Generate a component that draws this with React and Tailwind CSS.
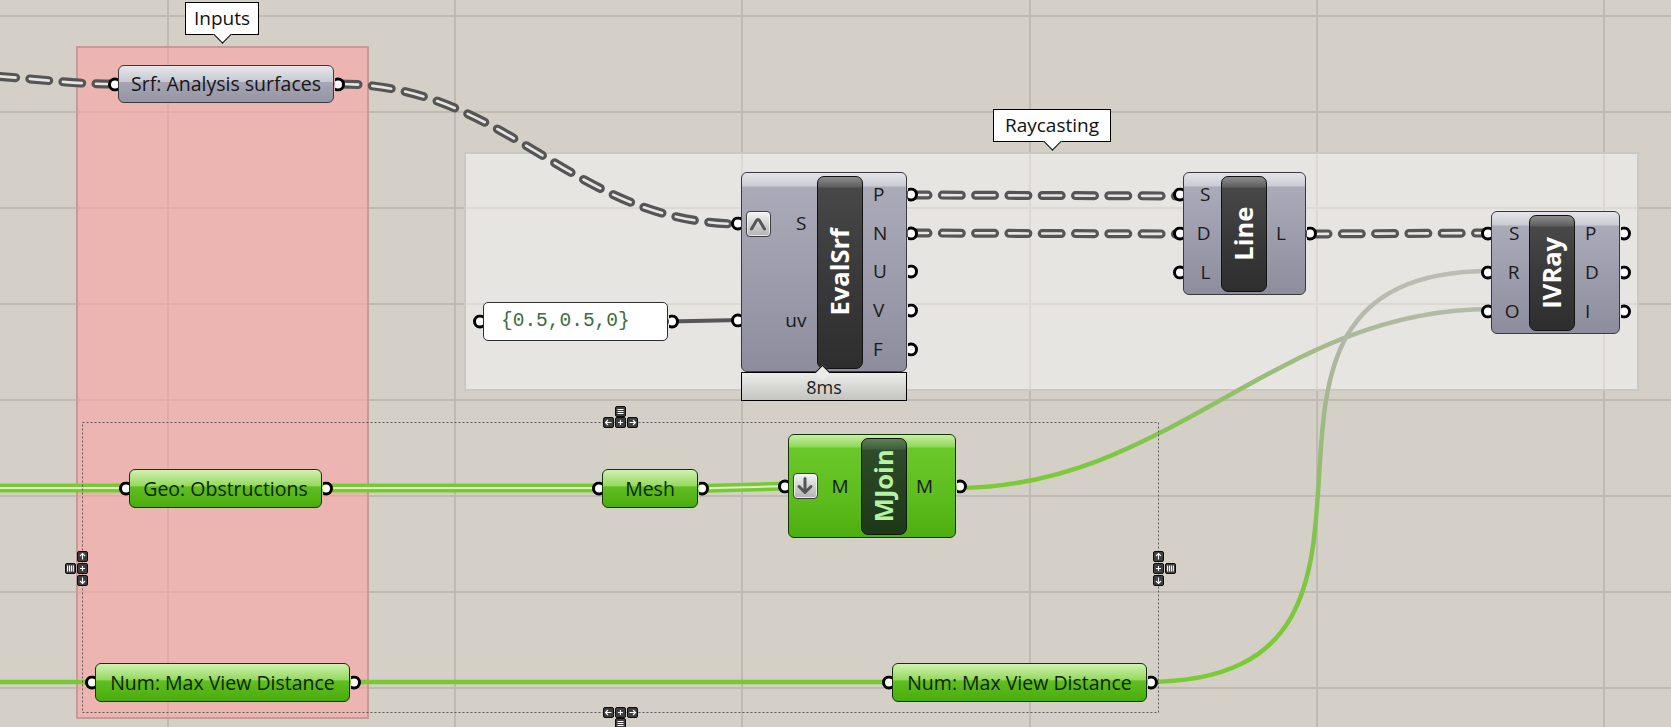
import React from "react";

const SANS = "font-['Open_Sans','Noto_Sans',sans-serif]";

const GRAY_COMP =
  "bg-[linear-gradient(to_bottom,#e4e4ea_0px,#cbcbd4_13px,#aaaab9_14px,#9a9aaa_60%,#8d8d9d_100%)] border-[#3a3a3a]";
const GREEN_COMP =
  "bg-[linear-gradient(to_bottom,#c9eea6_0px,#8fd657_12px,#6cc82a_13px,#5dbd1e_60%,#4eae10_100%)] border-[#133405]";
const GRAY_BAR =
  "bg-[linear-gradient(to_bottom,#8c8c8c_0px,#5e5e5e_10px,#484848_11px,#3a3a3a_50%,#2e2e2e_100%)] border-[#121212] text-white";
const GREEN_BAR =
  "bg-[linear-gradient(to_bottom,#5f7f59_0px,#3f5f3a_10px,#2f4d2b_11px,#26421f_50%,#1d3818_100%)] border-[#0b1a07] text-[#b6f2a4]";
const GRAY_PARAM =
  "bg-[linear-gradient(to_bottom,#e6e6ec_0%,#c8c8d1_44%,#a5a5b4_45%,#9595a5_100%)] border-[#3a3a3a]";
const GREEN_PARAM =
  "bg-[linear-gradient(to_bottom,#d0f2b0_0%,#93d75c_44%,#61bf20_45%,#4aac0e_100%)] border-[#143306]";

function PortL() {
  return (
    <span className="absolute left-[-11.5px] top-1/2 -translate-y-1/2 w-[10px] h-[15px] overflow-hidden">
      <span className="block w-[14px] h-[14px] mt-[0.5px] rounded-full border-[3.5px] border-black bg-white" />
    </span>
  );
}

function PortR() {
  return (
    <span className="absolute right-[-11.5px] top-1/2 -translate-y-1/2 w-[10px] h-[15px] overflow-hidden">
      <span className="block w-[14px] h-[14px] mt-[0.5px] ml-[-4px] rounded-full border-[3.5px] border-black bg-white" />
    </span>
  );
}

function Btn({ children }) {
  return (
    <div className="w-[25px] h-[26px] rounded-[4px] border-[1.5px] border-[#3d3d3d] bg-[linear-gradient(to_bottom,#f4f4f4,#b2b2b2)] shadow-[inset_0_0_0_1px_rgba(255,255,255,0.7)] flex items-center justify-center">
      {children}
    </div>
  );
}

function UpBtn() {
  return (
    <Btn>
      <svg width="20" height="20" viewBox="0 0 20 20">
        <path d="M3.5 15 L8.5 6.5 Q10 4.5 11.5 6.5 L16.5 15" stroke="#555" strokeWidth="3" fill="none" strokeLinecap="round" strokeLinejoin="round" />
      </svg>
    </Btn>
  );
}

function DownBtn() {
  return (
    <Btn>
      <svg width="20" height="20" viewBox="0 0 20 20">
        <path d="M10 2.5 V16 M4 10.5 L10 16.5 L16 10.5" stroke="#555" strokeWidth="3" fill="none" strokeLinecap="round" strokeLinejoin="round" />
      </svg>
    </Btn>
  );
}

function Comp({ pos, green, inW, inPr, outPl, name, inputs, outputs }) {
  return (
    <div
      className={`absolute flex py-[2.5px] rounded-[6px] border-[1.5px] ${green ? GREEN_COMP : GRAY_COMP} ${pos}`}
    >
      <div className={`flex flex-col ${inW}`}>
        {inputs.map((inp, i) => (
          <div key={i} className="relative flex flex-1 items-center">
            <PortL />
            {inp.button ? <div className="ml-[3.5px]">{inp.button}</div> : null}
            <span className={`ml-auto ${inPr} text-[19px] leading-none text-[#1a1a1a]`}>{inp.label}</span>
          </div>
        ))}
      </div>
      <div
        className={`flex w-[46.5px] items-center justify-center rounded-[7px] border-[1.5px] ${green ? GREEN_BAR : GRAY_BAR}`}
      >
        <span className="-rotate-90 whitespace-nowrap text-[25.5px] font-bold leading-none">{name}</span>
      </div>
      <div className="flex flex-1 flex-col">
        {outputs.map((o, i) => (
          <div key={i} className="relative flex flex-1 items-center">
            <span className={`${outPl} text-[19px] leading-none text-[#1a1a1a]`}>{o}</span>
            <PortR />
          </div>
        ))}
      </div>
    </div>
  );
}

function Param({ pos, green, text }) {
  return (
    <div
      className={`absolute flex items-center justify-center rounded-[6px] border-[1.5px] ${green ? GREEN_PARAM : GRAY_PARAM} ${pos}`}
    >
      <PortL />
      <span className={`text-[19.5px] leading-none ${green ? "text-[#0c2600]" : "text-[#161616]"}`}>{text}</span>
      <PortR />
    </div>
  );
}

function Handle({ pos, d }) {
  return (
    <div className={`absolute w-[11px] h-[11px] rounded-[2px] border border-[#0c0c0c] bg-[#3e3e3e] ${pos}`}>
      <svg width="9" height="9" viewBox="0 0 9 9" className="block">
        <path d={d} stroke="#fff" strokeWidth="1.1" fill="none" />
      </svg>
    </div>
  );
}

const ICON = {
  left: "M1.5 4.5 H7.5 M4 2 L1.5 4.5 L4 7",
  right: "M1.5 4.5 H7.5 M5 2 L7.5 4.5 L5 7",
  up: "M4.5 1.5 V7.5 M2 4 L4.5 1.5 L7 4",
  down: "M4.5 1.5 V7.5 M2 5 L4.5 7.5 L7 5",
  plus: "M2 4.5 H7 M4.5 2 V7",
  lines: "M1.5 2.5 H7.5 M1.5 4.5 H7.5 M1.5 6.5 H7.5",
  bars: "M1.6 1.5 V7.5 M3.5 1.5 V7.5 M5.4 1.5 V7.5 M7.3 1.5 V7.5",
};

function bez(x0, y0, x1, y1, k) {
  return `M${x0} ${y0} C${x0 + k} ${y0} ${x1 - k} ${y1} ${x1} ${y1}`;
}

function Tree({ d }) {
  return (
    <g fill="none" strokeLinecap="round">
      <path d={d} stroke="#555555" strokeWidth="9" strokeDasharray="19 14.3" />
      <path d={d} stroke="#e8e6e2" strokeWidth="2.6" strokeDasharray="19 14.3" />
    </g>
  );
}

function ListW({ d }) {
  return (
    <g fill="none">
      <path d={d} stroke="#78ca31" strokeWidth="9" />
      <path d={d} stroke="#dcefc9" strokeWidth="2" />
    </g>
  );
}

function Single({ d, stroke = "#78ca31" }) {
  return <path d={d} stroke={stroke} strokeWidth="4.5" fill="none" strokeLinecap="round" />;
}

export default function App() {
  const vx = [168, 455, 742, 1030, 1317, 1604];
  const hy = [16, 112, 208, 304, 400, 496, 592, 688];
  return (
    <div className={`relative w-[1671px] h-[727px] overflow-hidden bg-[#d4d0c8] ${SANS}`}>
      {/* canvas grid */}
      <svg className="absolute left-0 top-0" width="1671" height="727">
        {vx.map((x) => (
          <line key={"v" + x} x1={x} y1="0" x2={x} y2="727" stroke="#bfbbb3" strokeWidth="2" />
        ))}
        {hy.map((y) => (
          <line key={"h" + y} x1="0" y1={y} x2="1671" y2={y} stroke="#bfbbb3" strokeWidth="2" />
        ))}
      </svg>

      {/* groups */}
      <div className="absolute left-[76px] top-[46px] w-[293px] h-[673px] border-2 border-[#c29c99] bg-[rgba(255,159,158,0.55)]" />
      <div className="absolute left-[464px] top-[152px] w-[1175px] h-[239px] border-2 border-[#cac8c1] bg-[rgba(255,255,255,0.45)]" />

      {/* wires */}
      <svg className="absolute left-0 top-0" width="1671" height="727">
        <defs>
          <linearGradient id="gO" gradientUnits="userSpaceOnUse" x1="961" y1="0" x2="1484" y2="0">
            <stop offset="0" stopColor="#7acb33" />
            <stop offset="0.3" stopColor="#7fc744" />
            <stop offset="0.52" stopColor="#93bf6c" />
            <stop offset="0.76" stopColor="#adb99b" />
            <stop offset="1" stopColor="#b6bbab" />
          </linearGradient>
          <linearGradient id="gR" gradientUnits="userSpaceOnUse" x1="0" y1="682" x2="0" y2="271">
            <stop offset="0" stopColor="#7acb33" />
            <stop offset="0.32" stopColor="#80c446" />
            <stop offset="0.5" stopColor="#91bd6d" />
            <stop offset="0.76" stopColor="#adb69f" />
            <stop offset="1" stopColor="#bcbdb5" />
          </linearGradient>
        </defs>

        <Tree d="M-70 73 C20 75 55 84 113 84" />
        <Tree d={bez(339, 84, 741, 224, 170)} />
        <Tree d="M909 195 L1183 196" />
        <Tree d="M909 233 L1183 234" />
        <Tree d="M1309 234 L1491 233" />

        <path d="M668 321.5 L741 320" stroke="#575757" strokeWidth="4" fill="none" />

        <ListW d="M-10 488 L129 488" />
        <ListW d="M322 488 L602 488" />
        <ListW d="M698 488.5 L788 486" />

        <Single d="M-10 682 L95 682" />
        <Single d="M350 682 L892 682" />
        <Single d={bez(956, 488, 1491, 309, 215)} stroke="url(#gO)" />
        <Single d={bez(1147, 682, 1491, 271, 320)} stroke="url(#gR)" />

        {/* selection rectangle */}
        <rect x="82.5" y="422.5" width="1076" height="290" fill="none" stroke="#5a5a5a" strokeWidth="1" strokeDasharray="2 2" />
      </svg>

      {/* group labels */}
      <div className="absolute left-[185px] top-[2px] w-[74px] h-[33px] border-[1.5px] border-black bg-white flex items-center justify-center text-[19px] leading-none text-[#111]">
        Inputs
      </div>
      <div className="absolute left-[215.5px] top-[28px] w-[13px] h-[13px] rotate-45 border-r-[1.5px] border-b-[1.5px] border-black bg-white" />

      <div className="absolute left-[993px] top-[109px] w-[118px] h-[33px] border-[1.5px] border-black bg-white flex items-center justify-center text-[19px] leading-none text-[#111]">
        Raycasting
      </div>
      <div className="absolute left-[1045.5px] top-[135px] w-[13px] h-[13px] rotate-45 border-r-[1.5px] border-b-[1.5px] border-black bg-white" />

      {/* params */}
      <Param pos="left-[118px] top-[65px] w-[216px] h-[38px]" text="Srf: Analysis surfaces" />
      <Param pos="left-[129px] top-[469px] w-[193px] h-[39px]" green text="Geo: Obstructions" />
      <Param pos="left-[602px] top-[469px] w-[96px] h-[39px]" green text="Mesh" />
      <Param pos="left-[95px] top-[663px] w-[255px] h-[39px]" green text="Num: Max View Distance" />
      <Param pos="left-[892px] top-[663px] w-[255px] h-[39px]" green text="Num: Max View Distance" />

      {/* panel */}
      <div className="absolute left-[483px] top-[302px] w-[185px] h-[39px] rounded-[5px] border-[1.5px] border-[#2e2e2e] bg-white flex items-center pl-[17px]">
        <PortL />
        <span className="font-['Liberation_Mono',monospace] text-[19.5px] leading-none text-[#3a6e3a]">{"{0.5,0.5,0}"}</span>
        <PortR />
      </div>

      {/* components */}
      <Comp
        pos="left-[741px] top-[172px] w-[166px] h-[200px]"
        inW="w-[74.5px]"
        inPr="pr-[10px]"
        outPl="pl-[10px]"
        name="EvalSrf"
        inputs={[{ label: "S", button: <UpBtn /> }, { label: "uv" }]}
        outputs={["P", "N", "U", "V", "F"]}
      />
      <div className="absolute left-[741px] top-[372px] w-[166px] h-[29px] border-[1.5px] border-black bg-[linear-gradient(to_bottom,#ececea,#c3c3bf)] flex items-center justify-center text-[18px] leading-none text-[#1c1c1c]">
        8ms
      </div>
      <div className="absolute left-[817px] top-[367px] w-[11px] h-[11px] rotate-45 border-l-[1.5px] border-t-[1.5px] border-black bg-[#ebebe9]" />

      <Comp
        pos="left-[1183px] top-[172px] w-[123px] h-[123px]"
        inW="w-[36.5px]"
        inPr="pr-[10px]"
        outPl="pl-[9px]"
        name="Line"
        inputs={[{ label: "S" }, { label: "D" }, { label: "L" }]}
        outputs={["L"]}
      />
      <Comp
        pos="left-[1491px] top-[211px] w-[129px] h-[123px]"
        inW="w-[36.5px]"
        inPr="pr-[9px]"
        outPl="pl-[10px]"
        name="IVRay"
        inputs={[{ label: "S" }, { label: "R" }, { label: "O" }]}
        outputs={["P", "D", "I"]}
      />
      <Comp
        pos="left-[788px] top-[434px] w-[168px] h-[104px]"
        green
        inW="w-[71.5px]"
        inPr="pr-[12px]"
        outPl="pl-[9px]"
        name="MJoin"
        inputs={[{ label: "M", button: <DownBtn /> }]}
        outputs={["M"]}
      />

      {/* selection handles */}
      <Handle pos="left-[615px] top-[406px]" d={ICON.lines} />
      <Handle pos="left-[603px] top-[417px]" d={ICON.left} />
      <Handle pos="left-[615px] top-[417px]" d={ICON.plus} />
      <Handle pos="left-[627px] top-[417px]" d={ICON.right} />

      <Handle pos="left-[603px] top-[707px]" d={ICON.left} />
      <Handle pos="left-[615px] top-[707px]" d={ICON.plus} />
      <Handle pos="left-[627px] top-[707px]" d={ICON.right} />
      <Handle pos="left-[615px] top-[718px]" d={ICON.lines} />

      <Handle pos="left-[77px] top-[551px]" d={ICON.up} />
      <Handle pos="left-[77px] top-[563px]" d={ICON.plus} />
      <Handle pos="left-[77px] top-[575px]" d={ICON.down} />
      <Handle pos="left-[65px] top-[563px]" d={ICON.bars} />

      <Handle pos="left-[1153px] top-[551px]" d={ICON.up} />
      <Handle pos="left-[1153px] top-[563px]" d={ICON.plus} />
      <Handle pos="left-[1153px] top-[575px]" d={ICON.down} />
      <Handle pos="left-[1165px] top-[563px]" d={ICON.bars} />
    </div>
  );
}
